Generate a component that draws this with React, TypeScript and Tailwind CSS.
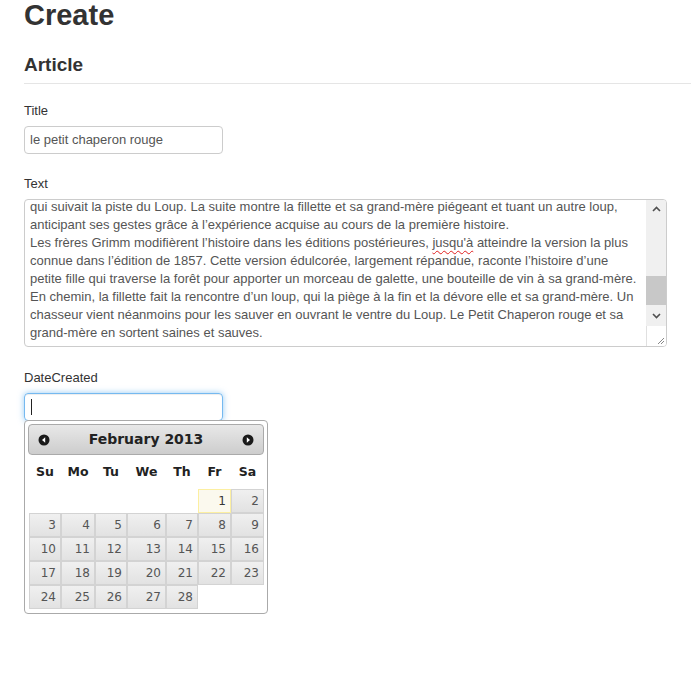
import { ReactNode } from "react";

const lines: ReactNode[] = [
  "qui suivait la piste du Loup. La suite montre la fillette et sa grand-mère piégeant et tuant un autre loup,",
  "anticipant ses gestes grâce à l’expérience acquise au cours de la première histoire.",
  <>
    Les frères Grimm modifièrent l’histoire dans les éditions postérieures,{" "}
    <span className="underline decoration-wavy decoration-[#e02020] decoration-1 underline-offset-[3px]">
      jusqu'à
    </span>{" "}
    atteindre la version la plus
  </>,
  "connue dans l’édition de 1857. Cette version édulcorée, largement répandue, raconte l’histoire d’une",
  "petite fille qui traverse la forêt pour apporter un morceau de galette, une bouteille de vin à sa grand-mère.",
  "En chemin, la fillette fait la rencontre d’un loup, qui la piège à la fin et la dévore elle et sa grand-mère. Un",
  "chasseur vient néanmoins pour les sauver en ouvrant le ventre du Loup. Le Petit Chaperon rouge et sa",
  "grand-mère en sortent saines et sauves.",
];

const dayNames = ["Su", "Mo", "Tu", "We", "Th", "Fr", "Sa"];

// février 2013 commence un vendredi
const weeks: (number | null)[][] = [
  [null, null, null, null, null, 1, 2],
  [3, 4, 5, 6, 7, 8, 9],
  [10, 11, 12, 13, 14, 15, 16],
  [17, 18, 19, 20, 21, 22, 23],
  [24, 25, 26, 27, 28, null, null],
];

function Label({ children }: { children: ReactNode }) {
  return <div className="h-[18px] leading-[18px] text-[13px] text-[#333] mb-[6px]">{children}</div>;
}

function NavIcon({ dir }: { dir: "prev" | "next" }) {
  return (
    <svg width="12" height="12" viewBox="0 0 12 12">
      <circle cx="6" cy="6" r="5.5" fill="#1a1a1a" />
      {dir === "prev" ? (
        <path d="M4 6 L7.2 3.3 L7.2 8.7 Z" fill="#fff" />
      ) : (
        <path d="M8 6 L4.8 3.3 L4.8 8.7 Z" fill="#fff" />
      )}
    </svg>
  );
}

function Chevron({ up }: { up?: boolean }) {
  return (
    <svg width="9" height="6" viewBox="0 0 9 6">
      <path
        d={up ? "M1 5 L4.5 1.5 L8 5" : "M1 1 L4.5 4.5 L8 1"}
        stroke="#505050"
        strokeWidth="1.6"
        fill="none"
      />
    </svg>
  );
}

function DatePicker() {
  return (
    <div className="absolute left-0 top-[27px] w-[244px] rounded-[4px] border border-[#aaa] bg-white p-[3px] pb-[4px] font-['DejaVu_Sans',Verdana,sans-serif]">
      <div className="flex h-[31px] items-center justify-between rounded-[4px] border border-[#aaa] bg-gradient-to-b from-[#e8e8e8] to-[#cdcdcd] px-[9px]">
        <NavIcon dir="prev" />
        <div className="text-[14px] font-bold text-[#222]">February 2013</div>
        <NavIcon dir="next" />
      </div>
      <div className="ml-px grid grid-cols-[32px_34px_32px_39px_32px_33px_33px]">
        {dayNames.map((d) => (
          <div key={d} className="flex h-[34px] items-center justify-center text-[12.5px] font-bold text-[#222]">
            {d}
          </div>
        ))}
        {weeks.flat().map((n, i) =>
          n === null ? (
            <div key={i} className="h-[24px]" />
          ) : (
            <div
              key={i}
              className={
                n === 1
                  ? "flex h-[24px] items-center justify-end border border-[#fcefa1] bg-[#fbf9ee] pr-[4px] text-[12px] text-[#363636]"
                  : "flex h-[24px] items-center justify-end border border-[#d3d3d3] bg-gradient-to-b from-[#f0f0f0] via-[#e9e9e9] to-[#e2e2e2] pr-[4px] text-[12px] text-[#555]"
              }
            >
              {n}
            </div>
          )
        )}
      </div>
    </div>
  );
}

export default function App() {
  return (
    <div className="min-h-[686px] bg-white pl-[24px] font-['Liberation_Sans',Arial,sans-serif] text-[#333]">
      <h1 className="text-[29px] leading-[30px] font-bold">Create</h1>
      <div className="mt-[23px] border-b border-[#e5e5e5] pb-[6px]">
        <h2 className="text-[19px] leading-[24px] font-bold">Article</h2>
      </div>

      <div className="mt-[18px]">
        <Label>Title</Label>
        <div className="flex h-[28px] w-[199px] items-center rounded-[4px] border border-[#ccc] px-[5px] text-[13px] text-[#555]">
          le petit chaperon rouge
        </div>
      </div>

      <div className="mt-[21px]">
        <Label>Text</Label>
        <div className="flex h-[148px] w-[643px] overflow-hidden rounded-[4px] border border-[#ccc]">
          <div className="flex-1 overflow-hidden pl-[5px] text-[13px] leading-[18px] text-[#555]">
            <div className="-mt-[2px]">
              {lines.map((l, i) => (
                <div key={i} className="whitespace-pre">
                  {l}
                </div>
              ))}
            </div>
          </div>
          <div className="flex w-[20px] flex-col">
            <div className="flex h-[126px] flex-col bg-[#f0f0f0]">
              <div className="flex h-[18px] items-center justify-center">
                <Chevron up />
              </div>
              <div className="h-[58px]" />
              <div className="h-[29px] bg-[#c8c8c8]" />
              <div className="flex h-[21px] items-center justify-center">
                <Chevron />
              </div>
            </div>
            <div className="relative flex-1 border-l border-[#e0e0e0] bg-white">
              <svg className="absolute bottom-[1px] right-[1px]" width="8" height="8" viewBox="0 0 8 8">
                <path d="M7 1 L1 7 M7 4 L4 7" stroke="#888" strokeWidth="1" />
              </svg>
            </div>
          </div>
        </div>
      </div>

      <div className="mt-[22px]">
        <Label>DateCreated</Label>
        <div className="relative w-[199px]">
          <div className="flex h-[28px] items-center rounded-[4px] border border-[rgba(82,168,236,0.8)] px-[6px] shadow-[inset_0_1px_1px_rgba(0,0,0,0.075),0_0_6px_rgba(82,168,236,0.6)]">
            <div className="h-[16px] w-px bg-[#222]" />
          </div>
          <DatePicker />
        </div>
      </div>
    </div>
  );
}
